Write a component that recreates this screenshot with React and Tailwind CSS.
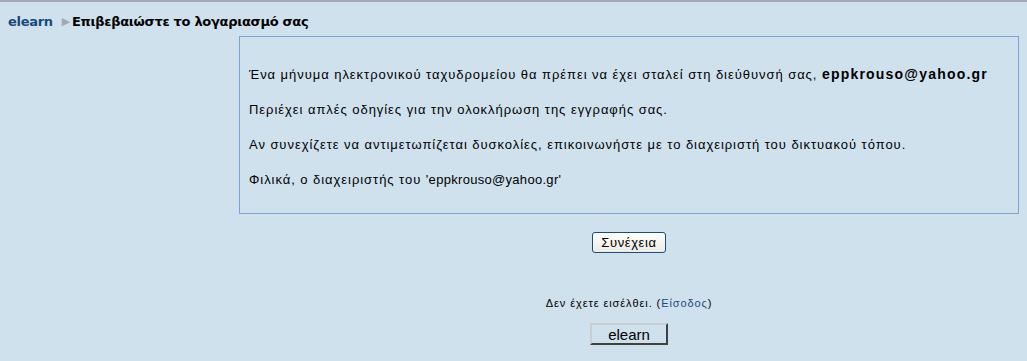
export default function App() {
  return (
    <div className="min-h-[361px] w-full bg-[#d0e1ee] border-t-2 border-[#a3acb6] font-['Liberation_Sans',Arial,sans-serif] text-black">
      <div className="flex items-center h-[22px] mt-[9px] pl-[8px] text-[13px] font-bold font-['DejaVu_Sans',Verdana,sans-serif] tracking-[-0.3px]">
        <a className="text-[#174a7c]">elearn</a>
        <span className="ml-[9px] mr-[2px] text-[11px] text-[#a0a8b0]">▶</span>
        <span>Επιβεβαιώστε το λογαριασμό σας</span>
      </div>

      <div className="flex">
        <div className="w-[239px] shrink-0" />
        <div className="w-[780px] flex flex-col items-center">
          <div className="w-full mt-[3px] h-[178px] border border-[#7ba4d3] px-[9px] pt-[29px] text-[13px] leading-[16px] tracking-[0.95px]">
            <p>
              Ένα μήνυμα ηλεκτρονικού ταχυδρομείου θα πρέπει να έχει σταλεί στη διεύθυνσή σας,{" "}
              <b className="text-[14px] tracking-[1.2px]">eppkrouso@yahoo.gr</b>
            </p>
            <p className="mt-[19px]">Περιέχει απλές οδηγίες για την ολοκλήρωση της εγγραφής σας.</p>
            <p className="mt-[19px]">
              Αν συνεχίζετε να αντιμετωπίζεται δυσκολίες, επικοινωνήστε με το διαχειριστή του δικτυακού τόπου.
            </p>
            <p className="mt-[19px]">
              Φιλικά, ο διαχειριστής του <span className="tracking-[0.3px]">'eppkrouso@yahoo.gr'</span>
            </p>
          </div>

          <button className="mt-[18px] h-[21px] w-[74px] rounded-[3px] border border-[#1c4c7c] bg-gradient-to-b from-white to-[#ecebe4] text-[13px] leading-none tracking-[0.6px]">
            Συνέχεια
          </button>

          <div className="mt-[44px] text-[11px] leading-[13px] tracking-[0.9px]">
            Δεν έχετε εισέλθει. (<a className="text-[#174a7c]">Είσοδος</a>)
          </div>

          <div className="mt-[13px] h-[22px] w-[78px] border-2 border-t-[#c9cdd1] border-l-[#c9cdd1] border-b-[#404040] border-r-[#404040] bg-[#d0e1ee] flex items-center justify-center text-[15px] leading-none">
            elearn
          </div>
        </div>
      </div>
    </div>
  );
}
